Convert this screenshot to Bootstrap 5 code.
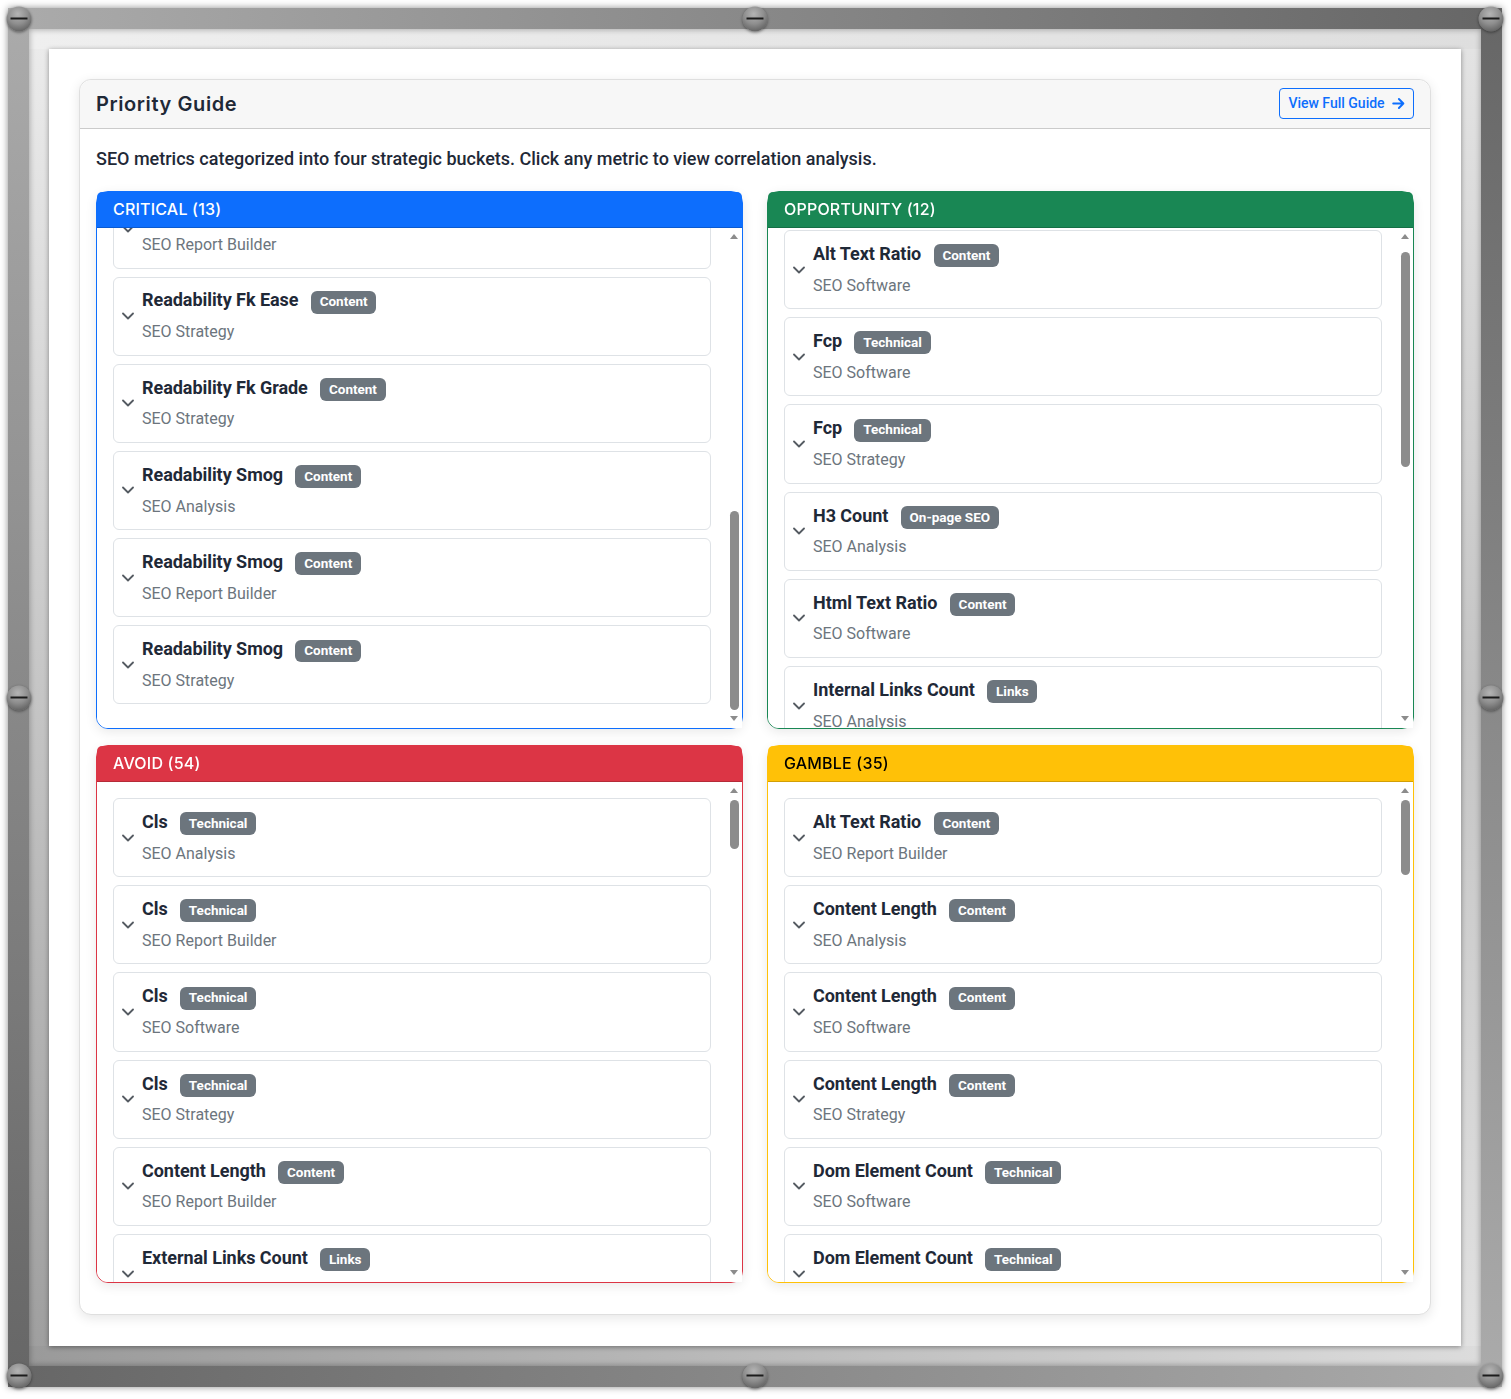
<!DOCTYPE html>
<html lang="en">
<head>
<meta charset="utf-8">
<title>Priority Guide</title>
<link rel="stylesheet" href="https://cdn.jsdelivr.net/npm/bootstrap@5.3.0/dist/css/bootstrap.min.css">
<style>
html,body{height:100%;overflow:hidden;background:#fff}
body{font-family:Roboto,"Liberation Sans",sans-serif;font-size:16px;color:#1f2937}
.frame{position:relative;margin:8px 9px 12px 8px;height:1379px;padding:21px;
  box-shadow:0 0 7px rgba(0,0,0,.45);
  background:
   linear-gradient(to right,#ababab,#666) top left/100% 21px no-repeat,
   linear-gradient(to right,#666,#ababab) bottom left/100% 21px no-repeat,
   linear-gradient(to bottom,#ababab,#666) top left/21px 100% no-repeat,
   linear-gradient(to bottom,#666,#ababab) top right/21px 100% no-repeat;}
.matte{height:100%;padding:20px;
  box-shadow:inset 0 0 6px rgba(0,0,0,.35);
  background:
   linear-gradient(to right,#efefef,#dedede) top left/100% 20px no-repeat,
   linear-gradient(to right,#9a9a9a,#dcdcdc) bottom left/100% 20px no-repeat,
   linear-gradient(to bottom,#ececec,#9e9e9e) top left/20px 100% no-repeat,
   linear-gradient(to bottom,#e4e4e4,#c4c4c4 50%,#e2e2e2) top right/20px 100% no-repeat;}
.sheet{height:100%;background:#fff;padding:30px;box-shadow:0 1px 5px rgba(0,0,0,.4)}
.screw{position:absolute;width:25px;height:25px;border-radius:50%;
  background:radial-gradient(circle at 45% 30%,#b4b4b4 0,#8e8e8e 45%,#5c5c5c 85%,#4a4a4a 100%);
  box-shadow:0 1px 3px rgba(0,0,0,.45);transform:translate(-50%,-50%)}
.screw::after{content:"";position:absolute;left:4px;right:4px;top:11px;height:2px;background:#1c1c1c}
.s-l{left:11px}.s-c{left:50%}.s-r{left:calc(100% - 11px)}
.s-t{top:11px}.s-m{top:50%}.s-b{top:calc(100% - 11px)}
.guide{border-radius:12px;box-shadow:0 3px 12px rgba(0,0,0,.1);height:1236px;border-color:#dfdfdf}
.guide-head{background:#f7f7f7;padding:8px 16px 9px;height:49px;flex:none;border-radius:12px 12px 0 0!important}
.guide-body{padding:16px 16px 15px}
.guide-title{font-family:Inter,"Open Sans",sans-serif;font-size:20px;font-weight:600;margin:0;letter-spacing:.6px}
.view-btn{font-weight:500;padding:4px 8px;height:31px;width:135px;font-size:14px;white-space:nowrap}
.view-btn svg{width:13px;height:13px;margin-left:7px;vertical-align:-2px}
.intro{font-size:18px;font-weight:500;margin-bottom:19px}
.bucket{border-radius:12px;height:538px;box-shadow:0 3px 12px rgba(0,0,0,.09);background:#fff;position:relative}
.bucket-head{font-family:Inter,"Open Sans",sans-serif;font-weight:500;font-size:16px;letter-spacing:.2px;height:36px;flex:none;padding:6px 16px;line-height:22px;border-radius:5px 5px 0 0!important}
.bucket-scroll{height:500px;overflow-y:scroll;padding:16px 31px 16px 16px;background:#fff;border-bottom-left-radius:11px;scrollbar-width:none}
.rail{position:absolute;top:36px;right:0;bottom:0;width:15px;background:#fff}
.rail-thumb{position:absolute;left:3px;width:9px;background:#8c8c8c;border-radius:5px}
.rail-up,.rail-down{position:absolute;left:3px;width:0;height:0;border-left:4.5px solid transparent;border-right:4.5px solid transparent}
.rail-up{top:6px;border-bottom:5px solid #8c8c8c}
.rail-down{bottom:7px;border-top:5px solid #8c8c8c}
.metric{border:1px solid #dee2e6;border-radius:6px;margin-bottom:8px;padding:12px 8px;display:flex;align-items:center;gap:8px;height:79.2px;background:#fff}
.metric svg{width:12px;height:8px;flex:none;color:#555b62}
.metric-name{font-size:18px;font-weight:700;line-height:1.2;margin:1.5px 0 6.5px;letter-spacing:-.05px}
.metric-name .badge{letter-spacing:0}
.metric-src{color:#6c757d;line-height:24px}
.top-gap{column-gap:24px;grid-template-columns:1fr 1fr}
.top-gap>div{margin-bottom:16px}
</style>
</head>
<body>
<div class="frame">
  <div class="matte">
    <div class="sheet">
      <div class="card guide">
        <div class="card-header guide-head d-flex justify-content-between align-items-center">
          <h2 class="guide-title">Priority Guide</h2>
          <a href="#" class="btn btn-outline-primary btn-sm view-btn">View Full Guide<svg viewBox="0 0 16 16" fill="none" stroke="currentColor" stroke-width="2.4" stroke-linecap="round" stroke-linejoin="round"><path d="M1.5 8h12.5M8.5 2.5 14 8l-5.5 5.5"/></svg></a>
        </div>
        <div class="card-body guide-body">
          <p class="intro">SEO metrics categorized into four strategic buckets. Click any metric to view correlation analysis.</p>
          <div class="d-grid top-gap" id="grid"></div>
        </div>
      </div>
    </div>
  </div>
  <span class="screw s-l s-t"></span><span class="screw s-c s-t"></span><span class="screw s-r s-t"></span>
  <span class="screw s-l s-m"></span><span class="screw s-r s-m"></span>
  <span class="screw s-l s-b"></span><span class="screw s-c s-b"></span><span class="screw s-r s-b"></span>
</div>
<script src="https://cdn.jsdelivr.net/npm/bootstrap@5.3.0/dist/js/bootstrap.bundle.min.js"></script>
<script>
const A='SEO Analysis',R='SEO Report Builder',W='SEO Software',S='SEO Strategy';
const C='Content',T='Technical',L='Links',O='On-page SEO';
function fill(list,n){const pool=[['Word Count',C],['Title Length',O],['Ttfb',T],['Lcp',T],['Meta Desc Length',O],['H2 Count',O]],srcs=[A,R,W,S];let i=0;while(list.length<n){const p=pool[i%pool.length];list.push([p[0],p[1],srcs[i%4]]);i++}return list}
const buckets=[
 {t:'CRITICAL (13)',h:'text-bg-primary',b:'border-primary',top:99999,items:[
  ['H1 Count',O,A],['H1 Count',O,R],['H1 Count',O,W],['H1 Count',O,S],['Lcp',T,A],['Lcp',T,R],['Readability Fk Ease',C,A],
  ['Readability Fk Ease',C,R],['Readability Fk Ease',C,S],['Readability Fk Grade',C,S],['Readability Smog',C,A],['Readability Smog',C,R],['Readability Smog',C,S]]},
 {t:'OPPORTUNITY (12)',h:'text-bg-success',b:'border-success',top:14,items:fill([
  ['Alt Text Ratio',C,W],['Fcp',T,W],['Fcp',T,S],['H3 Count',O,A],['Html Text Ratio',C,W],['Internal Links Count',L,A]],12)},
 {t:'AVOID (54)',h:'text-bg-danger',b:'border-danger',top:0,items:fill([
  ['Cls',T,A],['Cls',T,R],['Cls',T,W],['Cls',T,S],['Content Length',C,R],['External Links Count',L,A]],54)},
 {t:'GAMBLE (35)',h:'text-bg-warning',b:'border-warning',top:0,items:fill([
  ['Alt Text Ratio',C,R],['Content Length',C,A],['Content Length',C,W],['Content Length',C,S],['Dom Element Count',T,W],['Dom Element Count',T,S]],35)}
];
const chev='<svg viewBox="0 0 12 8" fill="none" stroke="currentColor" stroke-width="1.8" stroke-linecap="round" stroke-linejoin="round"><path d="M1 1.5l5 5 5-5"/></svg>';
document.getElementById('grid').innerHTML=buckets.map(b=>`<div class="card bucket ${b.b}"><div class="card-header bucket-head ${b.h}">${b.t}</div><div class="bucket-scroll" data-top="${b.top}">${b.items.map(i=>`<div class="metric">${chev}<div><div class="metric-name">${i[0]} <span class="badge bg-secondary ms-2">${i[1]}</span></div><div class="metric-src">${i[2]}</div></div></div>`).join('')}</div><div class="rail"><span class="rail-up"></span><span class="rail-thumb"></span><span class="rail-down"></span></div></div>`).join('');
document.querySelectorAll('.bucket').forEach(c=>{
  const e=c.querySelector('.bucket-scroll'),th=c.querySelector('.rail-thumb');
  e.scrollTop=+e.dataset.top;
  const track=464,h=track*e.clientHeight/e.scrollHeight,max=e.scrollHeight-e.clientHeight;
  th.style.height=h+'px';
  th.style.top=(18+(track-h)*e.scrollTop/max)+'px';
});
</script>
</body>
</html>
